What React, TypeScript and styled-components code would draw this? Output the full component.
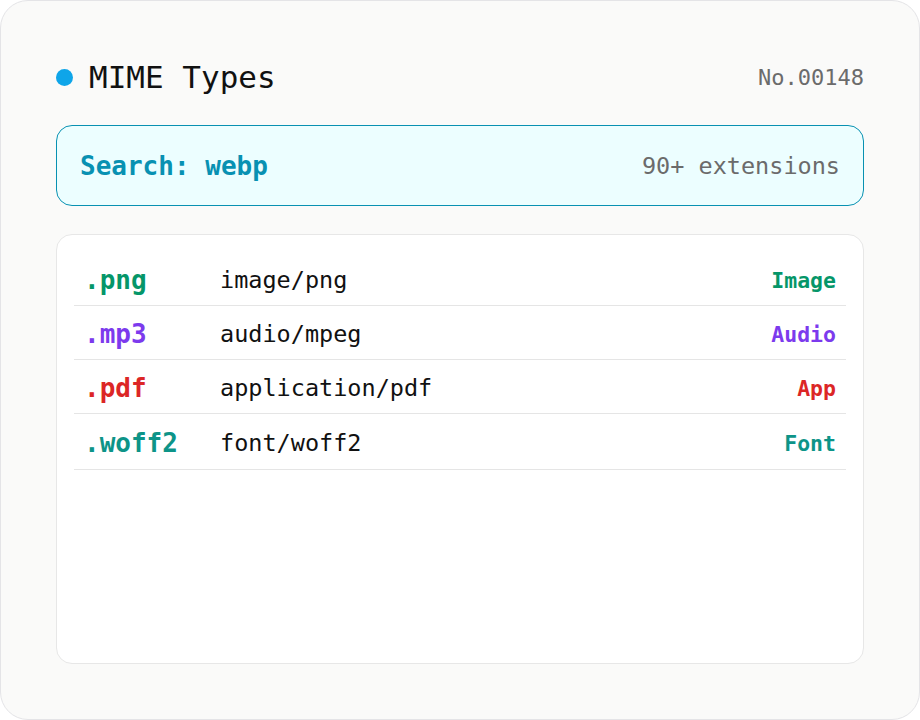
import React from "react"
import styled, { createGlobalStyle } from "styled-components"

const mono = `"DejaVu Sans Mono", "Liberation Mono", monospace`

const GlobalStyle = createGlobalStyle`
  html, body {
    margin: 0;
    padding: 0;
    background: #ffffff;
  }
  * {
    box-sizing: border-box;
  }
`

interface MimeEntry {
  ext: string
  type: string
  category: string
  color: string
}

const entries: MimeEntry[] = [
  { ext: ".png", type: "image/png", category: "Image", color: "#059669" },
  { ext: ".mp3", type: "audio/mpeg", category: "Audio", color: "#7c3aed" },
  { ext: ".pdf", type: "application/pdf", category: "App", color: "#dc2626" },
  { ext: ".woff2", type: "font/woff2", category: "Font", color: "#0d9488" },
]

const Card = styled.div`
  width: 920px;
  height: 720px;
  background: #fafaf9;
  border: 1px solid #e4e4e7;
  border-radius: 28px;
  padding: 56px 55px 55px;
  display: flex;
  flex-direction: column;
  gap: 28px;
  font-family: ${mono};
`

const Header = styled.div`
  display: flex;
  align-items: center;
  justify-content: space-between;
  height: 40px;
`

const TitleGroup = styled.div`
  display: flex;
  align-items: center;
  gap: 16px;
`

const Dot = styled.span`
  width: 17px;
  height: 17px;
  border-radius: 50%;
  background: #0ea5e9;
`

const Title = styled.h1`
  margin: 0;
  font-size: 31px;
  font-weight: 400;
  color: #111111;
`

const Serial = styled.span`
  font-size: 22px;
  color: #6b6b6b;
`

const SearchBox = styled.div`
  height: 81px;
  display: flex;
  align-items: center;
  justify-content: space-between;
  padding: 0 23px;
  background: #ecfeff;
  border: 1px solid #0891b2;
  border-radius: 16px;
`

const Query = styled.span`
  font-size: 26px;
  font-weight: 700;
  color: #0891b2;
`

const Count = styled.span`
  font-size: 23.5px;
  color: #6b6b6b;
`

const List = styled.div`
  flex: 1;
  background: #ffffff;
  border: 1px solid #e7e7e7;
  border-radius: 16px;
  padding: 17px 17px;
`

const Row = styled.div`
  display: flex;
  align-items: center;
  height: 54px;
  padding: 3px 10px 0;
  border-bottom: 1px solid #e5e5e5;
  &:nth-child(4) {
    height: 56px;
  }
`

const Ext = styled.span<{ $color: string }>`
  width: 136px;
  font-size: 26px;
  font-weight: 700;
  color: ${(p) => p.$color};
`

const MimeType = styled.span`
  flex: 1;
  font-size: 23.5px;
  color: #111111;
`

const Category = styled.span<{ $color: string }>`
  font-size: 21.5px;
  font-weight: 700;
  color: ${(p) => p.$color};
`

export default function App() {
  return (
    <>
      <GlobalStyle />
      <Card>
        <Header>
          <TitleGroup>
            <Dot />
            <Title>MIME Types</Title>
          </TitleGroup>
          <Serial>No.00148</Serial>
        </Header>

        <SearchBox>
          <Query>Search: webp</Query>
          <Count>90+ extensions</Count>
        </SearchBox>

        <List>
          {entries.map((e) => (
            <Row key={e.ext}>
              <Ext $color={e.color}>{e.ext}</Ext>
              <MimeType>{e.type}</MimeType>
              <Category $color={e.color}>{e.category}</Category>
            </Row>
          ))}
        </List>
      </Card>
    </>
  )
}
